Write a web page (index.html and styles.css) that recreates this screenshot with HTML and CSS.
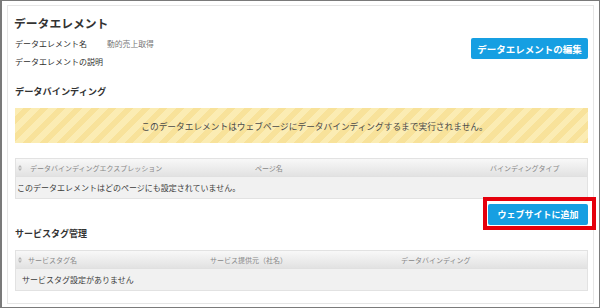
FILE: index.html
```html
<!DOCTYPE html>
<html lang="ja">
<head>
    <meta charset="UTF-8">
    <meta name="viewport" content="width=device-width, initial-scale=1.0">
    <title>データエレメント</title>
    <link rel="stylesheet" href="styles.css">
</head>
<body>
    <div class="frame">
        <div class="card">
            <h1 class="title">データエレメント</h1>
            <div class="info">
                <div class="fields">
                    <div class="field">
                        <span class="field-label">データエレメント名</span>
                        <span class="field-value">動的売上取得</span>
                    </div>
                    <div class="field">
                        <span class="field-label">データエレメントの説明</span>
                    </div>
                </div>
                <button class="btn btn-edit">データエレメントの編集</button>
            </div>

            <h2 class="section-title section-binding">データバインディング</h2>
            <div class="notice">このデータエレメントはウェブページにデータバインディングするまで実行されません。</div>

            <div class="table table-binding">
                <div class="thead">
                    <div class="th">
                        <svg class="sort" width="4" height="6" viewBox="0 0 4 6"><path d="M2 0L4 2.4H0Z M2 6L4 3.6H0Z" fill="#b5b5b5"/></svg>
                        データバインディングエクスプレッション
                    </div>
                    <div class="th">ページ名</div>
                    <div class="th">バインディングタイプ</div>
                </div>
                <div class="tbody">このデータエレメントはどのページにも設定されていません。</div>
            </div>

            <div class="actions">
                <span class="highlight">
                    <button class="btn btn-add">ウェブサイトに追加</button>
                </span>
            </div>

            <h2 class="section-title section-tags">サービスタグ管理</h2>
            <div class="table table-tags">
                <div class="thead">
                    <div class="th">
                        <svg class="sort" width="4" height="6" viewBox="0 0 4 6"><path d="M2 0L4 2.4H0Z M2 6L4 3.6H0Z" fill="#b5b5b5"/></svg>
                        サービスタグ名
                    </div>
                    <div class="th">サービス提供元（社名）</div>
                    <div class="th">データバインディング</div>
                </div>
                <div class="tbody">サービスタグ設定がありません</div>
            </div>
        </div>
    </div>
</body>
</html>
```

FILE: styles.css
```css
body {
    margin: 0;
    font-family: "Noto Sans CJK JP", "Noto Sans", sans-serif;
    background-color: #fff;
    color: #333;
}
.frame {
    width: 600px;
    height: 308px;
    box-sizing: border-box;
    border: 1px solid #7a7a7a;
    border-left-width: 2px;
    display: flex;
    flex-direction: column;
}
.card {
    flex: 1;
    margin: 4px 5px 3px 5px;
    border: 1px solid #e6e6e6;
    padding: 9px 5px 0 7px;
}
.title {
    margin: 0 0 3px -1px;
    font-size: 11.8px;
    line-height: 16px;
    font-weight: bold;
    color: #333;
}
.info {
    display: flex;
    justify-content: space-between;
    align-items: flex-start;
}
.field {
    display: flex;
    align-items: center;
    height: 18px;
}
.field-label {
    font-size: 8px;
    color: #2e2e2e;
    width: 92px;
}
.field-value {
    font-size: 7.8px;
    color: #777;
}
.btn {
    background-color: #169fe2;
    color: #fff;
    border: none;
    border-radius: 2px;
    font-family: inherit;
    font-weight: bold;
    cursor: pointer;
    padding: 0;
}
.btn-edit {
    margin-top: 4px;
    width: 117px;
    height: 21px;
    font-size: 9.5px;
}
.section-title {
    margin: 0;
    font-size: 9.2px;
    line-height: 14px;
    font-weight: bold;
    color: #333;
}
.section-binding {
    margin-top: 14px;
}
.notice {
    margin-top: 10px;
    height: 35px;
    display: flex;
    align-items: center;
    justify-content: center;
    padding: 1px 0 0 26px;
    box-sizing: border-box;
    font-size: 8.7px;
    color: #4a4a4a;
    background-color: #f9e6a0;
    background-image: repeating-linear-gradient(135deg, #fbecb3 0, #fbecb3 6px, #f8e29a 6px, #f8e29a 12px);
}
.table {
    border: 1px solid #e2e2e2;
}
.table-binding {
    margin-top: 15px;
}
.thead {
    display: grid;
    height: 17px;
    align-items: center;
    padding-left: 2px;
    background: linear-gradient(#f8f8f8, #e2e2e2);
    border-bottom: 1px solid #e0e0e0;
}
.table-binding .thead {
    grid-template-columns: 237px 235px 1fr;
}
.table-tags .thead {
    grid-template-columns: 192px 191px 1fr;
}
.th {
    font-size: 7px;
    color: #888;
    display: flex;
    align-items: center;
    white-space: nowrap;
}
.sort {
    margin-right: 8px;
}
.table-tags .sort {
    margin-right: 6px;
}
.tbody {
    height: 21px;
    display: flex;
    align-items: center;
    background-color: #f1f1f1;
    font-size: 8px;
    color: #3c3c3c;
    padding-left: 1px;
}
.table-tags .tbody {
    padding-left: 6px;
}
.actions {
    display: flex;
    justify-content: flex-end;
    margin-top: 5px;
}
.highlight {
    position: relative;
    display: inline-flex;
}
.highlight::after {
    content: '';
    position: absolute;
    left: -5px;
    right: -8px;
    top: -7px;
    bottom: -5px;
    border: 4px solid #e5000c;
}
.btn-add {
    width: 100px;
    height: 21px;
    font-size: 9px;
}
.section-tags {
    margin-top: 2px;
    font-size: 9px;
}
.table-tags {
    margin-top: 9px;
}
```
